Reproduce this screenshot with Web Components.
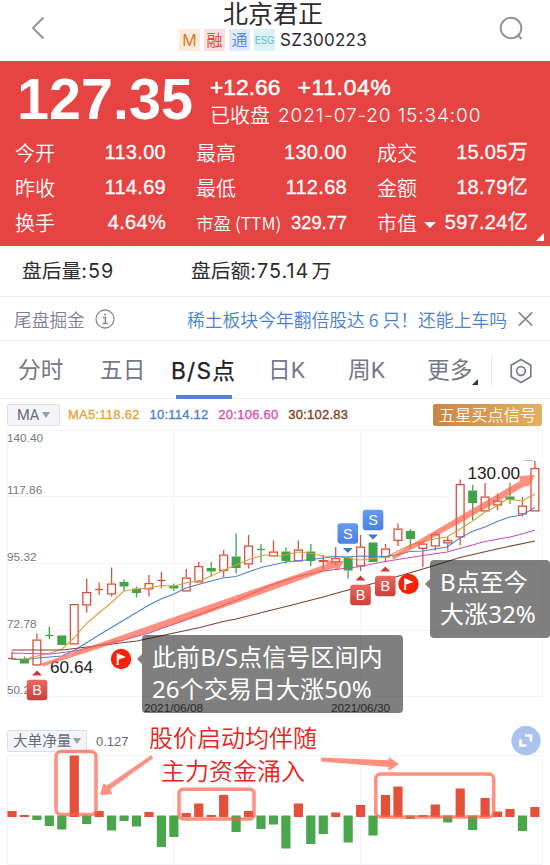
<!DOCTYPE html>
<html lang="zh-CN">
<head>
<meta charset="utf-8">
<title>北京君正 SZ300223</title>
<style>
  body {
    margin: 0;
    width: 550px;
    height: 865px;
    overflow: hidden;
    background: #fff;
    font-family: "Liberation Sans", "Noto Sans CJK SC", sans-serif;
  }
</style>
</head>
<body>
<stock-page></stock-page>

<script>
// Shared helper: every component renders one template string into its shadow root
class BaseElement extends HTMLElement {
  connectedCallback() {
    this.attachShadow({ mode: 'open' });
    this.shadowRoot.innerHTML = this.render();
  }
}

class StockHeader extends BaseElement {
  render() {
    return `
      <style>
        :host {
          display: flex;
          justify-content: space-between;
          height: 61px;
          padding: 0 27px 0 31px;
          box-sizing: border-box;
          color: #2b2b2f;
        }
        svg { margin-top: 16px; fill: none; stroke: #8f93a3; stroke-width: 2; }
        .center { display: flex; flex-direction: column; align-items: center; }
        .name { font: 25px/24px "Noto Sans CJK SC", sans-serif; height: 29px; }
        .tags { display: flex; gap: 4px; align-items: center; height: 22px; white-space: nowrap; }
        .tag {
          width: 21px;
          height: 22px;
          font: 16px/22px Inter, "Noto Sans CJK SC", sans-serif;
          text-align: center;
        }
        .m { background: #fbebdc; color: #e07b2c; }
        .r { background: #f8e0dc; color: #d9503f; }
        .t { background: #e1eafd; color: #5f8de6; }
        .e { background: #d9f3f7; color: #58bccb; font-size: 10px; }
        .code { font: 17px/22px Inter, sans-serif; letter-spacing: .25px; margin-left: 1px; }
      </style>
      <svg width="16" height="24"><path d="M12.500 1.500 2 12l10.500 10.500"/></svg>
      <div class="center">
        <div class="name">北京君正</div>
        <div class="tags">
          <span class="tag m">M</span><span class="tag r">融</span><span class="tag t">通</span><span class="tag e">ESG</span>
          <span class="code">SZ300223</span>
        </div>
      </div>
      <svg width="24" height="25"><circle cx="12" cy="12" r="10.300"/><path d="m18.500 18.500 4 4.500"/></svg>
    `;
  }
}

class QuoteCell extends BaseElement {
  render() {
    const small = this.hasAttribute('small');
    return `
      <style>
        :host { display: flex; justify-content: space-between; align-items: center; height: 35px; white-space: nowrap; }
        .label { font: ${small ? 17.5 : 20}px/34px "Noto Sans CJK SC", sans-serif; font-weight: 350; display: flex; align-items: center; }
        .value { font-size: ${small ? 18.3 : 20}px; line-height: 35px; letter-spacing: ${small ? 0 : .3}px; -webkit-text-stroke: .3px #fff; }
        i { margin-left: 7px; margin-top: 5px; border: 6px solid transparent; border-top-color: #fff; border-bottom: 0; }
      </style>
      <span class="label">${this.getAttribute('label')}${this.hasAttribute('menu') ? '<i></i>' : ''}</span>
      <span class="value"><slot></slot></span>
    `;
  }
}

class QuotePanel extends BaseElement {
  render() {
    return `
      <style>
        :host { display: block; position: relative; height: 185px; background: #e64443; color: #fff; overflow: hidden; }
        .top { display: flex; height: 74px; white-space: nowrap; }
        .price { font-size: 57.5px; line-height: 76px; font-weight: 700; margin-left: 17px; width: 193px; }
        .change { font-size: 22.8px; line-height: 26px; -webkit-text-stroke: .5px #fff; margin-top: 13px; display: flex; gap: 17px; }
        .pct { letter-spacing: .75px; }
        .time { font: 350 20px/26px Inter, "Noto Sans CJK SC", sans-serif; margin-top: 3px; display: flex; gap: 8px; }
        .stamp { font-size: 19px; font-weight: 350; letter-spacing: .9px; }
        .grid { display: grid; grid-template-columns: 151px 151px 151px; column-gap: 30px; padding-left: 15px; }
        .more { position: absolute; right: 6px; bottom: 5px; border: 4.5px solid transparent; border-right-color: #fff; border-bottom-color: #fff; }
      </style>
      <div class="top">
        <div class="price">127.35</div>
        <div>
          <div class="change"><span>+12.66</span><span class="pct">+11.04%</span></div>
          <div class="time"><span>已收盘</span><span class="stamp">2021-07-20 15:34:00</span></div>
        </div>
      </div>
      <div class="grid">
        <quote-cell label="今开">113.00</quote-cell>
        <quote-cell label="最高">130.00</quote-cell>
        <quote-cell label="成交">15.05万</quote-cell>
        <quote-cell label="昨收">114.69</quote-cell>
        <quote-cell label="最低">112.68</quote-cell>
        <quote-cell label="金额">18.79亿</quote-cell>
        <quote-cell label="换手">4.64%</quote-cell>
        <quote-cell label="市盈 (TTM)" small>329.77</quote-cell>
        <quote-cell label="市值" menu>597.24亿</quote-cell>
      </div>
      <span class="more"></span>
    `;
  }
}

class AfterHours extends BaseElement {
  render() {
    return `
      <style>
        :host {
          display: grid;
          grid-template-columns: 169px 1fr;
          height: 51px;
          padding-left: 22px;
          box-sizing: border-box;
          border-bottom: 1px solid #e9eaef;
          font: 19.8px/51px Inter, "Noto Sans CJK SC", sans-serif;
          color: #2d2d30;
        }
        b { font-weight: 400; letter-spacing: 1px; margin-right: 2px; }
      </style>
      <span>盘后量<b>:59</b></span><span>盘后额<b>:75.14</b><slot></slot></span>
    `;
  }
}

class NewsBar extends BaseElement {
  render() {
    return `
      <style>
        :host {
          display: flex;
          align-items: center;
          height: 44px;
          padding: 0 17px 0 14px;
          box-sizing: border-box;
          border-bottom: 1px solid #e9eaef;
          font: 350 17.7px/42px "Noto Sans CJK SC", sans-serif;
          color: #7e8292;
          white-space: nowrap;
        }
        svg { fill: none; stroke: #858998; }
        .info { margin-left: 10px; }
        .link { margin-left: auto; margin-right: 11px; font-size: 17.8px; color: #4a7fcf; display: flex; }
      </style>
      <span>尾盘掘金</span>
      <svg class="info" width="20" height="20" stroke-width="1.300"><circle cx="10" cy="10" r="9"/><path d="M7.800 8.500h2.600V14.500M7.500 14.500h5.300" stroke-width="1.500"/><circle cx="10" cy="5.500" r="1" fill="#858998" stroke="none"/></svg>
      <span class="link"><span>稀土板块今年翻倍股达 6 只！</span><span>还能上车吗</span></span>
      <svg width="15" height="16" stroke-width="1.700"><path d="m.8 1.300 13.400 13.400M14.200 1.300.8 14.700"/></svg>
    `;
  }
}

class ChartTabs extends BaseElement {
  render() {
    return `
      <style>
        :host {
          display: grid;
          grid-template-columns: 82px 71px 97px 80px 79px 64px 1fr;
          height: 58px;
          padding-left: 18px;
          box-sizing: border-box;
          border-bottom: 1px solid #e9eaef;
          font: 22.7px/60px Roboto, "Noto Sans CJK SC", sans-serif;
          color: #747888;
          white-space: nowrap;
        }
        .on { position: relative; color: #222; font: 22.7px/60px Inter, "Noto Sans CJK SC", sans-serif; letter-spacing: 1.2px; -webkit-text-stroke: .25px #222; }
        .on::after { content: ''; position: absolute; left: 5px; bottom: 2px; width: 56px; height: 4px; background: #5582d6; }
        .more { display: flex; }
        .more i { align-self: flex-end; margin: 0 0 16px 0; border: 3.5px solid transparent; border-right-color: #333; border-bottom-color: #333; }
        .set { display: flex; align-items: center; justify-content: flex-end; padding-right: 18px; }
        .set::before { content: ''; width: 1px; height: 31px; background: #e9eaef; margin-right: 17px; }
        svg { fill: none; stroke: #777b8a; stroke-width: 1.7; }
      </style>
      <span>分时</span><span>五日</span><span class="on">B/S点</span><span>日K</span><span>周K</span>
      <span class="more">更多<i></i></span>
      <span class="set"><svg width="24" height="26"><path d="M12 1.500 21.800 7.200v11.600L12 24.500 2.200 18.800V7.200Z" stroke-linejoin="round"/><circle cx="12" cy="13" r="4.300"/></svg></span>
    `;
  }
}

class PickBox extends BaseElement {
  render() {
    return `
      <style>
        :host {
          display: inline-flex;
          align-items: center;
          gap: 3px;
          height: 22px;
          padding: 0 8px;
          box-sizing: border-box;
          border: 1px solid #dcdfea;
          border-radius: 2px;
          background: #f4f5fa;
          color: #686c7b;
          font: 14.6px/20px Roboto, "Noto Sans CJK SC", sans-serif;
          white-space: nowrap;
        }
        i { border: 4px solid transparent; border-top: 6px solid #9a9eaa; border-bottom: 0; }
      </style>
      <slot></slot><i></i>
    `;
  }
}

class MaLegend extends BaseElement {
  render() {
    return `
      <style>
        :host { display: flex; align-items: center; height: 31px; padding: 0 8px 0 7px; box-sizing: border-box; font-size: 13px; white-space: nowrap; }
        pick-box { width: 53px; margin-right: 8px; padding-left: 9px; box-sizing: border-box; }
        .v { margin-right: 9.8px; letter-spacing: .25px; -webkit-text-stroke: .35px currentColor; }
        .signal {
          margin-left: auto;
          width: 109px;
          height: 22px;
          border-radius: 2px;
          background: linear-gradient(90deg, #cc8447, #e0b25f);
          color: #fff8e8;
          font: 350 16.3px/21px "Noto Sans CJK SC", sans-serif;
          text-align: center;
        }
      </style>
      <pick-box>MA</pick-box>
      <span class="v" style="color:#e2a63d">MA5:118.62</span>
      <span class="v" style="color:#4a7fd0">10:114.12</span>
      <span class="v" style="color:#d84fb4">20:106.60</span>
      <span class="v" style="color:#7b3f20">30:102.83</span>
      <span class="signal">五星买点信号</span>
    `;
  }
}

// Dark bubble with a small pointer on its left side
class CalloutTip extends BaseElement {
  render() {
    return `
      <style>
        :host {
          display: block;
          position: absolute;
          height: 78px;
          padding: 6px 0 0 10px;
          box-sizing: border-box;
          border-radius: 4px;
          background: rgba(0, 0, 0, .5);
          color: #fff;
          font: 24.1px/32px "Noto Sans", "Noto Sans CJK SC", sans-serif;
          white-space: nowrap;
        }
        :host::before {
          content: '';
          position: absolute;
          left: -5px;
          top: 19px;
          border: 5px solid transparent;
          border-right-color: rgba(0, 0, 0, .5);
          border-left: 0;
        }
      </style>
      <slot></slot>
    `;
  }
}

const STEP = 12.45;
const X0 = 12;
const RED = '#d9503d';
const GREEN = '#40a348';
const xAt = i => X0 + i * STEP;

// up/down, body top, body bottom, high, low
const candles = [
  ['r', 658, 659, 651.5, 660], ['g', 659, 663.5, 656.5, 663.5], ['r', 639.5, 665.5, 633.5, 665.5],
  ['g', 635, 636, 626.5, 639], ['g', 635.5, 645, 635.5, 645], ['r', 604, 644.5, 604, 644.5],
  ['r', 592, 605.5, 578.5, 612.5], ['r', 589, 590, 582.5, 595], ['r', 583.5, 594.5, 567.5, 596.5],
  ['g', 582, 586.5, 579.5, 591], ['g', 588.5, 593, 586.5, 597.5], ['r', 583, 589.5, 575, 596.5],
  ['r', 580, 581, 572, 588.5], ['g', 585.5, 588.5, 583.5, 591], ['r', 577.5, 591.5, 569, 591.5],
  ['r', 566, 582.5, 562, 582.5], ['g', 568, 571.5, 562, 576.5], ['r', 554.5, 571, 550, 577],
  ['g', 556.5, 568, 533.5, 573.5], ['r', 545.5, 564.5, 535, 568.5], ['g', 549, 550, 544, 562.5],
  ['r', 551.5, 556.5, 540.5, 556.5], ['g', 551.5, 561, 547.5, 563.5], ['r', 549.5, 561.5, 540.5, 561.5],
  ['g', 551.5, 561, 544, 566], ['r', 560, 562, 555, 569.5], ['r', 558, 562.5, 547, 565],
  ['g', 557.5, 570.5, 556, 578.5], ['r', 546.5, 566.5, 535, 571], ['g', 542.5, 562, 542.5, 562],
  ['r', 548.5, 557.5, 544, 562.5], ['r', 528.5, 541, 523.5, 546], ['g', 531, 539, 529, 548.5],
  ['r', 543.5, 549, 541.5, 567], ['r', 534, 546.5, 532, 550.5], ['r', 540, 543.5, 537, 550.5],
  ['r', 484, 537.5, 479.5, 545.5], ['g', 490.5, 503, 485, 520], ['r', 496.5, 511.5, 483, 511.5],
  ['r', 500.5, 505.5, 493.5, 510], ['g', 496.5, 500, 483, 504], ['r', 505.5, 514.5, 497, 516.5],
  ['r', 468, 511.5, 461, 511.5]
];

const averages = {
  '#dba03c': '12,659 24,659 37,656 50,653 62,649 74,638 87,623 99,613 112,602 124,591 137,589 149,588 161,585.5 174,586 186,583 202,580 223,570.500 236,565 250,559 265,555 280,556 298,552 311,553.500 323,556 337,556.500 348,558 360,560 373,558.500 385,557.500 398,551 410,545 423,541.500 435,539 447,537 460,529 472,521.500 485,512 497,506 507,499 514,500 522,501 535,494',
  '#4f82c9': '12,659 24,660 37,658 62,656 75,650 99,635 124,620 149,605 161,599 174,594 186,588 200,584 223,578 236,576.500 248,572 263,567 286,562 311,559.500 335,556.500 348,557 360,556 385,556.500 398,554.500 410,551.500 423,551 435,549 447,547 460,538 472,531.500 485,527 497,521.500 510,517 522,515 535,507.500',
  '#c64fae': '12,653 50,654 75,651 100,645 124,640 149,633 180,622 207,611.500 237,600 270,585.500 298,576.500 323,571 348,568 360,566.500 385,561.500 423,555.500 447,552 485,541.500 510,537 522,534 535,530',
  '#76462f': '12,650 62,650 75,648.500 99,645.500 137,641 174,633 200,627.500 223,621.500 236,619 270,610.500 298,603.500 323,597 348,590 373,583.500 423,569 460,557.500 497,549 535,541'
};

// end of each bar: above 816 is inflow, below is outflow
const flows = [811, 815, 820, 826, 829.5, 755.5, 824, 811, 830.5, 821, 826.5, 812, 847, 837, 813, 803.5,
  815, 795, 832, 811, 829, 824.5, 848.5, 803.5, 844, 834, 812.5, 842.5, 805, 835.5, 795, 786.5, 819,
  815, 804.5, 822.5, 788.5, 830, 798, 811.5, 809, 831, 807];

function drawCandle([kind, top, bottom, high, low], i) {
  const x = xAt(i);
  const color = kind === 'r' ? RED : GREEN;
  const flat = bottom - top <= 1;
  const wick = (a, b) => b > a ? `<path d="M${x} ${a}V${b}" stroke="${color}" stroke-width="1.300"/>` : '';
  if (flat) {
    return wick(high, low) + `<path d="M${x - 4} ${top + .5}h8" stroke="${color}" stroke-width="1.300"/>`;
  }
  const body = kind === 'r'
    ? `<rect x="${x - 3.9}" y="${top + .6}" width="7.800" height="${bottom - top - 1.2}" fill="#fff" stroke="${color}" stroke-width="1.300"/>`
    : `<rect x="${x - 4.5}" y="${top}" width="9" height="${bottom - top}" fill="${color}"/>`;
  return wick(high, top) + wick(bottom, low) + body;
}

function drawMarker(letter, x, y) {
  const sell = letter === 'S';
  const tri = sell
    ? `<path d="M${x - 5} ${y + 14.5}h10l-5 5Z" fill="#4473c4"/>`
    : `<path d="M${x - 5} ${y - 14.5}h10l-5-5Z" fill="#cf3a37"/>`;
  return `${tri}<rect x="${x - 10.3}" y="${y - 10.3}" width="20.600" height="20.600" rx="3" fill="url(#${sell ? 'sell' : 'buy'})"/>
    <text x="${x}" y="${y + 5}" text-anchor="middle" font-size="14.500" fill="#fff">${letter}</text>`;
}

function drawFlag(x, y) {
  return `<circle cx="${x}" cy="${y}" r="10.200" fill="#fb2105"/><path d="M${x - 4.3} ${y - 6}v12h2v-5.500L${x + 5} ${y - 2}Z" fill="#fff"/>`;
}

class KlineChart extends BaseElement {
  render() {
    const labels = [['140.40', 442], ['117.86', 494], ['95.32', 560.5], ['72.78', 627.5], ['50.24', 694]];
    return `
      <style>
        :host { display: block; position: relative; height: 290px; }
        svg { display: block; font-family: "Liberation Sans", sans-serif; }
        .first { left: 142px; top: 205px; width: 261px; }
        .second { left: 430px; top: 130px; width: 120px; }
      </style>
      <svg width="550" height="290" viewBox="0 430 550 290">
        <defs>
          <linearGradient id="buy" x2="0" y2="1"><stop stop-color="#ea6961"/><stop offset="1" stop-color="#c9403a"/></linearGradient>
          <linearGradient id="sell" x2="0" y2="1"><stop stop-color="#659af5"/><stop offset="1" stop-color="#4c7fe0"/></linearGradient>
        </defs>
        <path d="M7.500 697V430.500H542.500V697M7.500 496.500H542.500M7.500 563.500H542.500M7.500 630.500H542.500M7.500 696.500H542.500M173.500 430V697M360.500 430V697" fill="none" stroke="#f4f4f6"/>
        <g font-size="11.800" fill="#747781">
          ${labels.map(([t, y]) => `<text x="7" y="${y}">${t}</text>`).join('')}
        </g>
        <g font-size="11.800" fill="#555"><text x="144" y="711.500">2021/06/08</text><text x="331" y="711.500">2021/06/30</text></g>
        ${candles.map(drawCandle).join('')}
        ${Object.entries(averages).map(([c, p]) => `<polyline points="${p}" fill="none" stroke="${c}" stroke-width="1.100"/>`).join('')}
        <path d="M524 460.500h10" stroke="#b4c3d0"/>
        <g font-size="17.200" fill="#222"><text x="50" y="672.500">60.64</text><text x="467.500" y="479">130.00</text></g>
        <g fill="#ff6047" fill-opacity=".7">
          <path d="M41 663.500 200 608 327 564 324 560.500 344 561 338 571 334 568 200 616 43 666.500Z"/>
          <path d="M391.500 556 460 516 520 481 519 476 535 475 529 486 524 486.500 460 523 393.500 559.500Z"/>
        </g>
        ${drawMarker('B', 37, 690)}
        ${drawMarker('B', 360.5, 595)}
        ${drawMarker('B', 385.3, 586)}
        ${drawMarker('S', 347.8, 533.5)}
        ${drawMarker('S', 373, 520)}
        ${drawFlag(121, 659)}
        ${drawFlag(408.5, 584)}
      </svg>
      <callout-tip class="first">此前B/S点信号区间内<br>26个交易日大涨50%</callout-tip>
      <callout-tip class="second">B点至今<br>大涨32%</callout-tip>
    `;
  }
}

class FlowChart extends BaseElement {
  render() {
    const bars = flows.map((y, i) => y < 816
      ? `<rect x="${xAt(i) - 4.6}" y="${y}" width="9.200" height="${817 - y}" fill="#e4513a"/>`
      : `<rect x="${xAt(i) - 4.6}" y="815.500" width="9.200" height="${y - 815.5}" fill="#49a64a"/>`).join('');
    return `
      <style>
        :host { display: block; position: relative; height: 145px; }
        .bar { display: flex; align-items: center; padding: 10px 9px 0 7px; height: 22px; color: #666a76; font-size: 13px; }
        pick-box { width: 80px; margin-right: 9px; padding: 0 4px 0 5px; gap: 2px; }
        svg { position: absolute; left: 0; top: 0; }
        .note {
          position: absolute;
          left: 149px;
          top: 1px;
          width: 168px;
          color: #e8231c;
          font: 350 24px/32.5px "Noto Sans CJK SC", sans-serif;
          text-align: center;
          white-space: nowrap;
        }
      </style>
      <svg width="550" height="145" viewBox="0 720 550 145">
        <path d="M7.500 864V755.500H542.500V864M7.500 864.500H542.500M173.500 755V864M360.500 755V864" fill="none" stroke="#f4f4f6"/>
        ${bars}
        <g fill="none" stroke="#ff6047" stroke-opacity=".7" stroke-width="3.500">
          <rect x="56" y="751.500" width="40" height="63" rx="5"/>
          <rect x="179" y="789.300" width="75" height="29.700" rx="4"/>
          <rect x="375.700" y="774" width="118" height="43" rx="5"/>
        </g>
        <g fill="#ff6047" fill-opacity=".7">
          <path d="M151 755.300 153.300 758 110 789.500 112.500 794.300 100 795 103.500 783.300 107 785.500Z"/>
          <path d="M321 757.500V761.500L388.700 767V771L399 764 388.700 757V760.300Z"/>
        </g>
        <circle cx="526" cy="740.700" r="14.600" fill="#a9c2ee"/>
        <path d="M525 735.500h6v6M520.500 739.500v6h6" fill="none" stroke="#fff" stroke-width="2.600"/>
      </svg>
      <div class="bar"><pick-box>大单净量</pick-box><span>0.127</span></div>
      <div class="note">股价启动均伴随<br>主力资金涌入</div>
    `;
  }
}

class StockPage extends BaseElement {
  render() {
    return `
      <style>
        :host { display: flex; flex-direction: column; width: 550px; height: 865px; }
        :host > * { flex: none; }
      </style>
      <stock-header></stock-header>
      <quote-panel></quote-panel>
      <after-hours>万</after-hours>
      <news-bar></news-bar>
      <chart-tabs></chart-tabs>
      <ma-legend></ma-legend>
      <kline-chart></kline-chart>
      <flow-chart></flow-chart>
    `;
  }
}

customElements.define('stock-header', StockHeader);
customElements.define('quote-cell', QuoteCell);
customElements.define('quote-panel', QuotePanel);
customElements.define('after-hours', AfterHours);
customElements.define('news-bar', NewsBar);
customElements.define('chart-tabs', ChartTabs);
customElements.define('pick-box', PickBox);
customElements.define('ma-legend', MaLegend);
customElements.define('callout-tip', CalloutTip);
customElements.define('kline-chart', KlineChart);
customElements.define('flow-chart', FlowChart);
customElements.define('stock-page', StockPage);
</script>
</body>
</html>
